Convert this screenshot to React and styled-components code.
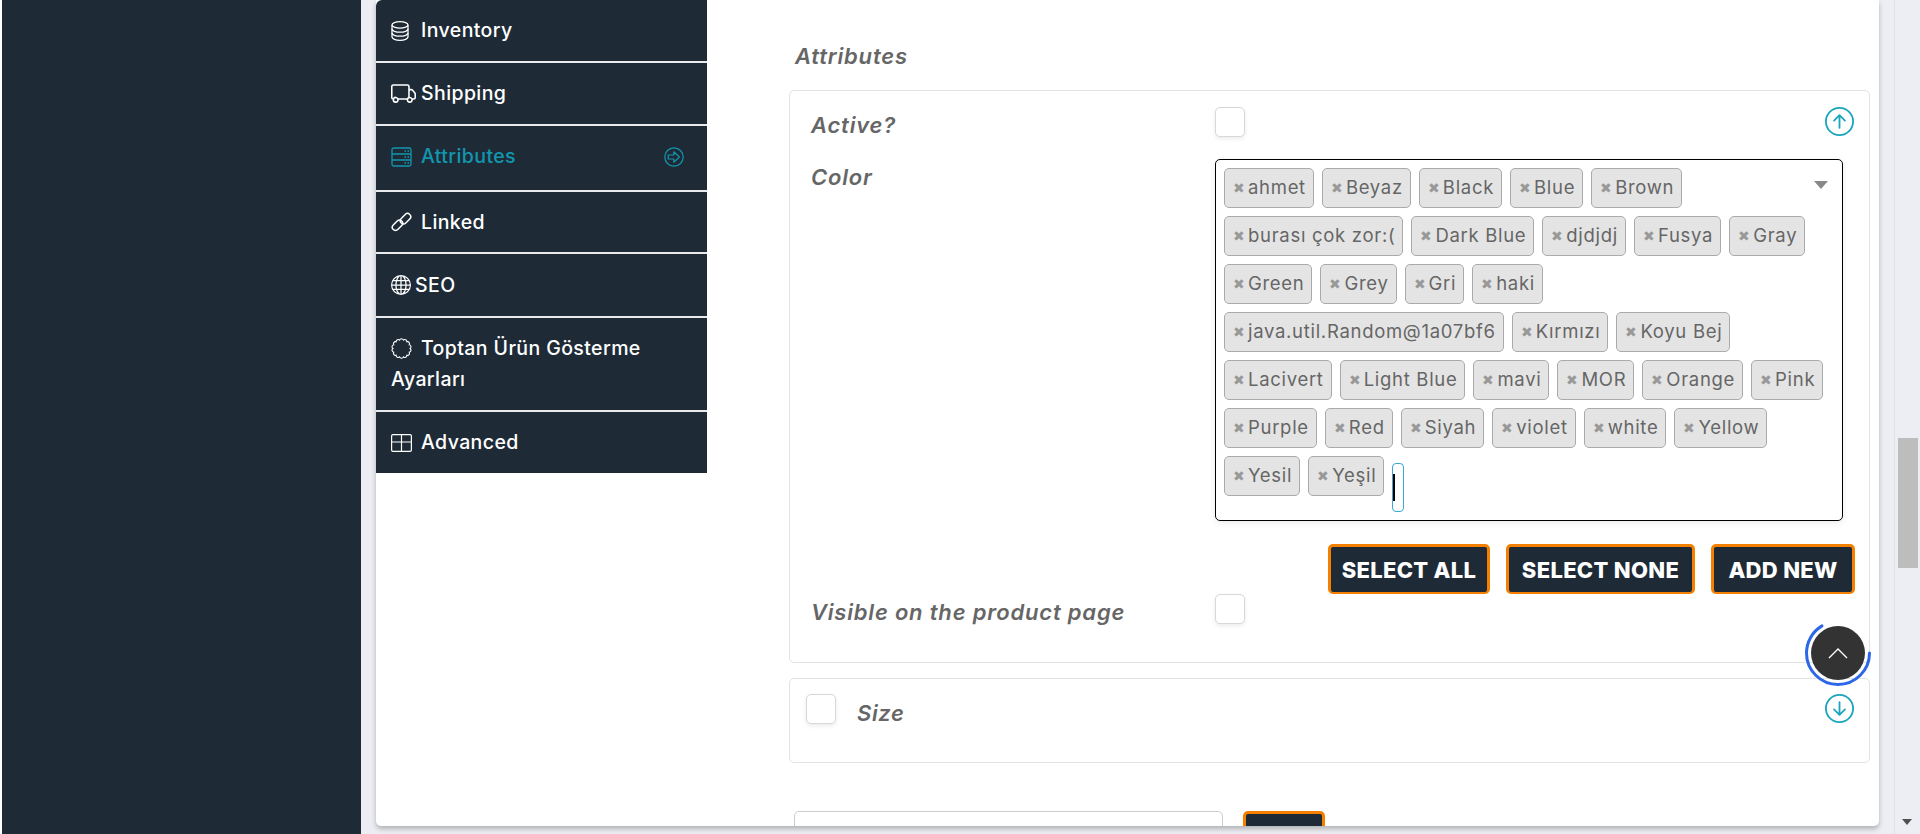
import React from "react";
import styled, { createGlobalStyle } from "styled-components";
import { BsTruck, BsGlobe, BsArrowUpCircle, BsArrowDownCircle } from "react-icons/bs";

const FONT = `"Inter", "Noto Sans", "Liberation Sans", sans-serif`;
const DARK = "#1e2b37";
const TEAL = "#1296ae";

const tagRows = [
  ["ahmet", "Beyaz", "Black", "Blue", "Brown"],
  ["burası çok zor:(", "Dark Blue", "djdjdj", "Fusya", "Gray"],
  ["Green", "Grey", "Gri", "haki"],
  ["java.util.Random@1a07bf6", "Kırmızı", "Koyu Bej"],
  ["Lacivert", "Light Blue", "mavi", "MOR", "Orange", "Pink"],
  ["Purple", "Red", "Siyah", "violet", "white", "Yellow"],
  ["Yesil", "Yeşil"],
];

// scalloped outline of the "Toptan" menu icon
function scallopPath(bumps, r, cx, cy) {
  let d = "";
  for (let i = 0; i <= bumps; i++) {
    const a = (i / bumps) * Math.PI * 2;
    const x = (cx + r * Math.cos(a)).toFixed(2);
    const y = (cy + r * Math.sin(a)).toFixed(2);
    d += i === 0 ? `M${x} ${y}` : `A2.05 2.05 0 0 1 ${x} ${y}`;
  }
  return d + "Z";
}

function PatchIcon() {
  return (
    <svg width="21" height="21" viewBox="0 0 21 21" fill="none" stroke="currentColor" strokeWidth="1.1">
      <path d={scallopPath(14, 8.6, 10.5, 10.5)} />
    </svg>
  );
}

function DatabaseIcon() {
  return (
    <svg width="18" height="20" viewBox="0 0 18 20" fill="none" stroke="currentColor" strokeWidth="1.3">
      <ellipse cx="9" cy="3.9" rx="8" ry="3.2" />
      <path d="M1 3.9v12.2c0 1.8 3.6 3.2 8 3.2s8-1.4 8-3.2V3.9" />
      <path d="M1 8c0 1.8 3.6 3.2 8 3.2s8-1.4 8-3.2M1 12c0 1.8 3.6 3.2 8 3.2s8-1.4 8-3.2" />
    </svg>
  );
}

function ServerIcon() {
  return (
    <svg width="21" height="20" viewBox="0 0 21 20" fill="none" stroke="currentColor" strokeWidth="1.3">
      <rect x="1" y="1" width="19" height="18" rx="1.8" />
      <path d="M1 7h19M1 13h19" />
      <path d="M13.5 4h1.6M16.5 4h1.6M13.5 10h1.6M16.5 10h1.6M13.5 16h1.6M16.5 16h1.6" />
    </svg>
  );
}

function LinkIcon() {
  return (
    <svg width="21" height="20" viewBox="0 0 21 20" fill="none" stroke="currentColor" strokeWidth="1.5">
      <rect x="0.5" y="10.1" width="12" height="6.4" rx="3.2" transform="rotate(-45 6.5 13.3)" />
      <rect x="8.5" y="3.5" width="12" height="6.4" rx="3.2" transform="rotate(-45 14.5 6.7)" />
    </svg>
  );
}

function GridIcon() {
  return (
    <svg width="21" height="18" viewBox="0 0 21 18" fill="none" stroke="currentColor" strokeWidth="1.2">
      <rect x="0.6" y="0.6" width="19.8" height="16.8" rx="1.4" />
      <path d="M10.5 1v16M1 8h19" />
    </svg>
  );
}

function ActiveArrowIcon() {
  return (
    <svg width="20" height="20" viewBox="0 0 20 20" fill="none" stroke="currentColor" strokeWidth="1.2">
      <circle cx="10" cy="10" r="9.2" />
      <path d="M4.2 8h5.6V4.8L15.4 10l-5.6 5.2V12H4.2z" strokeLinejoin="round" />
    </svg>
  );
}

function App() {
  return (
    <Page>
      <GlobalStyle />
      <SidePanel />
      <Main>
        <Card>
          <Menu>
            <MenuItem $height={63}><DatabaseIcon /><MenuLabel $gap={12}>Inventory</MenuLabel></MenuItem>
            <MenuItem $height={63}><BsTruck size={25} /><MenuLabel $gap={5}>Shipping</MenuLabel></MenuItem>
            <MenuItem $height={66} $active>
              <ServerIcon />
              <MenuLabel>Attributes</MenuLabel>
              <MenuArrow><ActiveArrowIcon /></MenuArrow>
            </MenuItem>
            <MenuItem $height={62}><LinkIcon /><MenuLabel>Linked</MenuLabel></MenuItem>
            <MenuItem $height={64}><BsGlobe size={20} /><MenuLabel $gap={4}>SEO</MenuLabel></MenuItem>
            <MenuItem $height={94} $wrap>
              <PatchIcon />
              <MenuLabel>Toptan Ürün Gösterme<br />Ayarları</MenuLabel>
            </MenuItem>
            <MenuItem $height={61} $last><GridIcon /><MenuLabel>Advanced</MenuLabel></MenuItem>
          </Menu>
          <Content>
            <Heading>Attributes</Heading>
            <Panel>
              <FieldLabel>Active?</FieldLabel>
              <ActiveRow>
                <Check />
                <ToggleIcon><BsArrowUpCircle size={29} /></ToggleIcon>
              </ActiveRow>
              <FieldLabel>Color</FieldLabel>
              <SelectBox>
                {tagRows.map((row) => (
                  <TagRow key={row[0]}>
                    {row.map((tag) => (
                      <Tag key={tag}><TagX>✖</TagX>{tag}</Tag>
                    ))}
                    {row[0] === "Yesil" && <SearchInput><Caret /></SearchInput>}
                  </TagRow>
                ))}
                <SelectArrow />
              </SelectBox>
              <Buttons>
                <ActionButton $width={162}>SELECT ALL</ActionButton>
                <ActionButton $width={189}>SELECT NONE</ActionButton>
                <ActionButton $width={144}>ADD NEW</ActionButton>
              </Buttons>
              <FieldLabel>Visible on the product page</FieldLabel>
              <Check />
            </Panel>
            <SizePanel>
              <Check />
              <SizeLabel>Size</SizeLabel>
              <ToggleIcon><BsArrowDownCircle size={29} /></ToggleIcon>
            </SizePanel>
            <BottomRow>
              <BottomInput />
              <BottomButton />
            </BottomRow>
          </Content>
        </Card>
      </Main>
      <Scrollbar>
        <Thumb />
        <ScrollArrow />
      </Scrollbar>
      <BackToTop>
        <svg width="68" height="68" viewBox="0 0 68 68" fill="none">
          <circle cx="34" cy="34" r="31.5" stroke="#2c67e8" strokeWidth="3" strokeLinecap="round" strokeDasharray="131.4 66.5" />
        </svg>
        <TopCircle>
          <svg width="20" height="12" viewBox="0 0 20 12" fill="none" stroke="#fff" strokeWidth="1.4">
            <path d="M1 11 L10 2 L19 11" />
          </svg>
        </TopCircle>
      </BackToTop>
    </Page>
  );
}

const GlobalStyle = createGlobalStyle`
  html, body {
    margin: 0;
    height: 100%;
    overflow: hidden;
    background: #edeef3;
  }
  * {
    box-sizing: border-box;
  }
`;

const Page = styled.div`
  position: relative;
  display: flex;
  height: 834px;
  font-family: ${FONT};
  border-left: 2px solid #fff;
`;

const SidePanel = styled.aside`
  width: 359px;
  flex-shrink: 0;
  background: ${DARK};
`;

const Main = styled.main`
  flex: 1;
  min-width: 0;
  padding: 0 15px 8px;
`;

const Card = styled.div`
  display: flex;
  height: 100%;
  overflow: hidden;
  background: #fff;
  border-radius: 0 0 5px 5px;
  box-shadow: 0 3px 5px rgba(0, 0, 0, 0.25);
`;

const Menu = styled.nav`
  width: 331px;
  flex-shrink: 0;
  align-self: flex-start;
  border-top-left-radius: 6px;
  overflow: hidden;
`;

const MenuItem = styled.div`
  height: ${(p) => p.$height}px;
  padding: ${(p) => (p.$wrap ? "15px" : "0")} 15px ${(p) => (p.$active ? "3px" : "0")};
  display: ${(p) => (p.$wrap ? "block" : "flex")};
  align-items: center;
  background: ${DARK};
  color: ${(p) => (p.$active ? TEAL : "#fff")};
  border-bottom: ${(p) => (p.$last ? "none" : "2px solid #e8eaee")};
  font-size: 19.5px;
  font-weight: 500;
  letter-spacing: 0.4px;
  line-height: 31px;

  svg {
    flex-shrink: 0;
    vertical-align: -4px;
  }
`;

const MenuLabel = styled.span`
  margin-left: ${(p) => p.$gap ?? 9}px;
`;

const MenuArrow = styled.span`
  margin-left: auto;
  margin-right: 8px;
  display: flex;
`;

const Content = styled.section`
  flex: 1;
  min-width: 0;
  padding: 42px 9px 0 82px;
`;

const Heading = styled.h2`
  margin: 0 0 20px 6px;
  font-size: 22px;
  line-height: 28px;
  font-weight: 600;
  font-style: italic;
  letter-spacing: 0.8px;
  color: #666;
`;

const Panel = styled.div`
  display: grid;
  grid-template-columns: 404px 1fr;
  padding: 16px 15px 35px 21px;
  border: 1px solid #e3e3e3;
  border-radius: 5px;
`;

const FieldLabel = styled.label`
  margin-top: 3px;
  font-size: 22px;
  line-height: 30px;
  font-weight: 600;
  font-style: italic;
  letter-spacing: 0.8px;
  color: #666;
`;

const ActiveRow = styled.div`
  display: flex;
  justify-content: space-between;
  margin-bottom: 22px;
`;

const Check = styled.span`
  display: block;
  width: 30px;
  height: 30px;
  flex-shrink: 0;
  background: #fff;
  border: 1px solid #d8d8d8;
  border-radius: 5px;
  box-shadow: 0 2px 4px rgba(0, 0, 0, 0.08);
`;

const ToggleIcon = styled.span`
  display: flex;
  color: #19a5bd;
  margin-left: auto;
`;

const SelectBox = styled.div`
  position: relative;
  height: 362px;
  margin-right: 11px;
  padding: 8px;
  display: flex;
  flex-direction: column;
  gap: 8px;
  border: 1px solid #000;
  border-radius: 5px;
  box-shadow: 0 2px 6px rgba(0, 0, 0, 0.08);
`;

const TagRow = styled.div`
  display: flex;
  align-items: flex-start;
  gap: 8px;
`;

const Tag = styled.span`
  display: flex;
  align-items: center;
  height: 40px;
  padding: 0 7px 2px 8px;
  background: #e4e4e4;
  border: 1px solid #aaa;
  border-radius: 5px;
  color: #666;
  font-size: 18.5px;
  letter-spacing: 0.7px;
  white-space: nowrap;
`;

const TagX = styled.span`
  margin-right: 3px;
  color: #999;
  font-size: 14px;
  letter-spacing: 0;
`;

const SearchInput = styled.span`
  display: block;
  width: 12px;
  height: 49px;
  margin-top: 7px;
  padding-top: 10px;
  border: 1px solid #3ba7d5;
  border-radius: 4px;
`;

const Caret = styled.span`
  display: block;
  width: 2px;
  height: 27px;
  background: #000;
`;

const SelectArrow = styled.span`
  position: absolute;
  top: 21px;
  right: 14px;
  border-style: solid;
  border-width: 8px 7px 0;
  border-color: #888 transparent transparent;
`;

const Buttons = styled.div`
  grid-column: 2;
  display: flex;
  justify-content: flex-end;
  gap: 16px;
  margin-top: 23px;
  margin-right: -1px;
`;

const ActionButton = styled.button`
  width: ${(p) => p.$width}px;
  height: 50px;
  padding: 0;
  background: ${DARK};
  border-style: solid;
  border-color: #f58000;
  border-width: 3px 3px 2px;
  border-radius: 5px;
  color: #fff;
  font-family: ${FONT};
  font-size: 22px;
  font-weight: 800;
  letter-spacing: 0.3px;
`;

const SizePanel = styled.div`
  display: flex;
  align-items: flex-start;
  height: 85px;
  margin-top: 15px;
  padding: 15px 15px 0 16px;
  border: 1px solid #e3e3e3;
  border-radius: 5px;
`;

const SizeLabel = styled.span`
  margin: 4px 0 0 21px;
  font-size: 22px;
  line-height: 30px;
  font-weight: 600;
  font-style: italic;
  letter-spacing: 0.6px;
  color: #666;
`;

const BottomRow = styled.div`
  display: flex;
  gap: 20px;
  margin: 48px 0 0 5px;
`;

const BottomInput = styled.div`
  width: 429px;
  height: 50px;
  border: 1px solid #ccc;
  border-radius: 5px;
`;

const BottomButton = styled.div`
  width: 82px;
  height: 50px;
  background: ${DARK};
  border: 3px solid #f58000;
  border-radius: 5px;
`;

const Scrollbar = styled.div`
  position: relative;
  width: 26px;
  flex-shrink: 0;
  padding: 438px 2px 0 3px;
  border-left: 1px solid #dfe0e5;
`;

const Thumb = styled.div`
  height: 130px;
  background: #bdbdbd;
`;

const ScrollArrow = styled.span`
  position: absolute;
  bottom: 9px;
  left: 7px;
  border-style: solid;
  border-width: 6px 5.5px 0;
  border-color: #505050 transparent transparent;
`;

const BackToTop = styled.div`
  position: absolute;
  left: 1802px;
  top: 619px;
  width: 68px;
  height: 68px;
`;

const TopCircle = styled.div`
  position: absolute;
  top: 7px;
  left: 7px;
  width: 54px;
  height: 54px;
  display: flex;
  align-items: center;
  justify-content: center;
  background: #333;
  border-radius: 50%;
`;

export default App;
